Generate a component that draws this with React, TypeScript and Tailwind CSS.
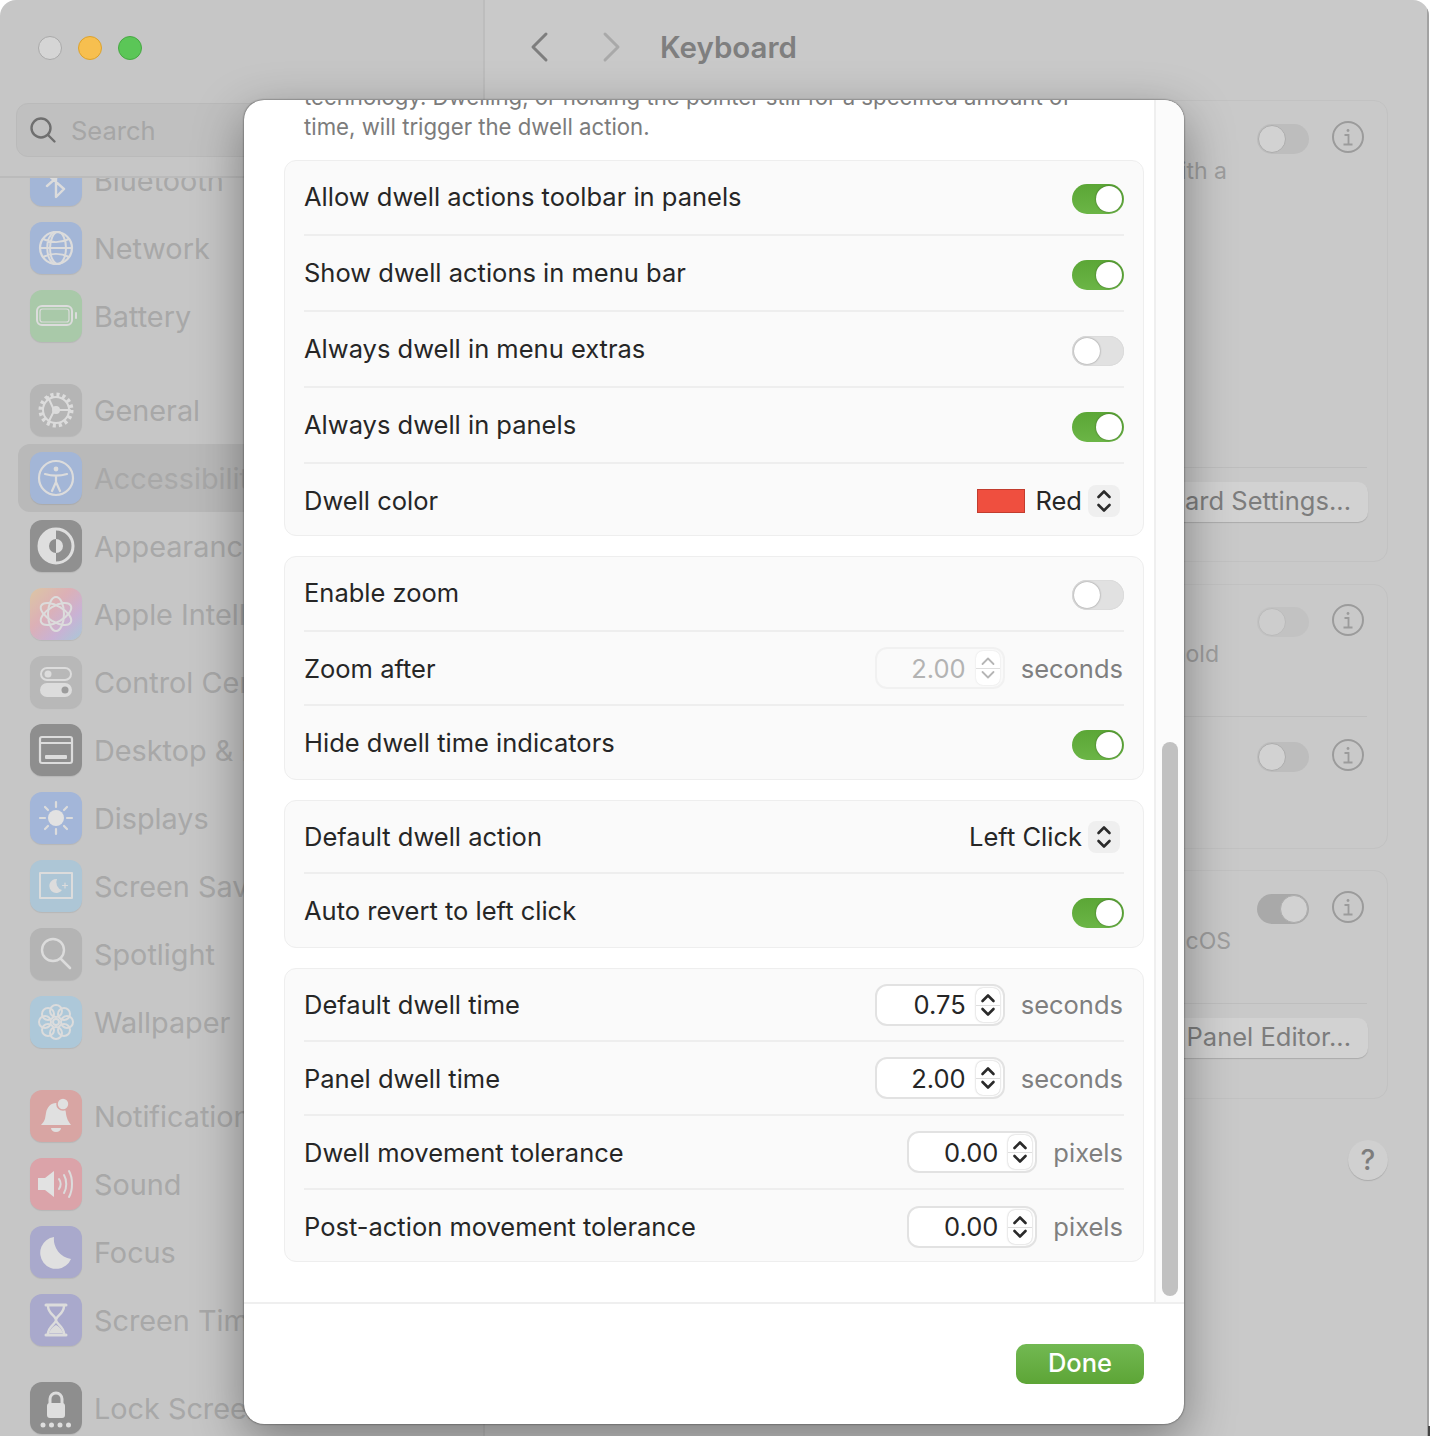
import React from "react";

const FONT = "font-['Inter','Noto_Sans',sans-serif]";

function Glyph({ children, bg }: { children: React.ReactNode; bg: string }) {
  return (
    <div className={`w-[52px] h-[52px] rounded-[12px] shrink-0 shadow-[0_1px_1px_rgba(0,0,0,0.08)] ${bg}`}>
      <svg width="52" height="52" viewBox="0 0 52 52" fill="none" stroke="#dcdcdc" strokeWidth="2" strokeLinecap="round" strokeLinejoin="round">
        {children}
      </svg>
    </div>
  );
}

const icons: Record<string, React.ReactNode> = {
  bluetooth: <path d="M17 20l17 15-8 8V9l8 8-17 15" strokeWidth="2.4" />,
  network: (
    <>
      <circle cx="26" cy="26" r="16" strokeWidth="2.2" />
      <ellipse cx="28" cy="26" rx="8" ry="16" />
      <path d="M13 17c8 4 18 4 26 0M10 26h32M13 35c8-4 18-4 26 0M24 10c-9 6-9 26 0 32" />
    </>
  ),
  battery: (
    <>
      <rect x="7" y="16" width="35" height="19" rx="5" strokeWidth="2" />
      <rect x="10" y="19" width="29" height="13" rx="2.5" strokeWidth="1.2" />
      <path d="M46 23v5" />
    </>
  ),
  general: (
    <>
      <circle cx="26" cy="26" r="15" strokeWidth="5" strokeDasharray="3 2.89" strokeLinecap="butt" />
      <circle cx="26" cy="26" r="13" />
      <circle cx="26" cy="26" r="3" fill="#dcdcdc" />
      <path d="M24 26L18 13M29 26h11M24 27l-6 12" />
    </>
  ),
  accessibility: (
    <>
      <circle cx="26" cy="26" r="17" strokeWidth="2.2" />
      <circle cx="26" cy="17" r="2.4" fill="#dcdcdc" stroke="none" />
      <path d="M15 22c7 2 15 2 22 0M26 24v6M26 30l-4 9M26 30l4 9" strokeWidth="2.2" />
    </>
  ),
  appearance: (
    <>
      <circle cx="26" cy="26" r="17" stroke="#dedede" strokeWidth="3" />
      <path d="M26 9a17 17 0 0 0 0 34z" fill="#dedede" stroke="none" />
      <path d="M26 19a7 7 0 0 0 0 14z" fill="#8e8e8e" stroke="none" />
      <path d="M26 19a7 7 0 0 1 0 14z" fill="#dedede" stroke="none" />
    </>
  ),
  intelligence: (
    <>
      <ellipse cx="26" cy="26" rx="8" ry="17" />
      <ellipse cx="26" cy="26" rx="8" ry="17" transform="rotate(60 26 26)" />
      <ellipse cx="26" cy="26" rx="8" ry="17" transform="rotate(120 26 26)" />
    </>
  ),
  control: (
    <>
      <rect x="11" y="12" width="30" height="12" rx="6" />
      <circle cx="18" cy="18" r="3.5" fill="#dcdcdc" stroke="none" />
      <rect x="11" y="28" width="30" height="12" rx="6" fill="#dcdcdc" />
      <circle cx="35" cy="34" r="3.5" fill="#9c9c9c" stroke="none" />
    </>
  ),
  desktop: (
    <>
      <rect x="10" y="13" width="32" height="26" rx="2" strokeWidth="2.2" />
      <path d="M10 19h32" />
      <rect x="15" y="31" width="22" height="4" rx="1" fill="#dcdcdc" stroke="none" />
    </>
  ),
  displays: (
    <>
      <circle cx="26" cy="26" r="8" fill="#e2e2e2" stroke="none" />
      <path d="M26 10v5M26 37v5M10 26h5M37 26h5M15 15l3 3M34 34l3 3M15 37l3-3M34 18l3-3" strokeWidth="2.2" />
    </>
  ),
  saver: (
    <>
      <rect x="10" y="13" width="32" height="25" strokeWidth="2" />
      <path d="M27 19a7 7 0 1 0 5 11 8 8 0 0 1-5-11z" fill="#dcdcdc" stroke="none" />
      <path d="M35 23v5M32.500 25.500h5" strokeWidth="1.2" />
    </>
  ),
  spotlight: (
    <>
      <circle cx="23" cy="22" r="11" strokeWidth="2.4" />
      <path d="M31 31l9 9" strokeWidth="2.6" />
    </>
  ),
  wallpaper: (
    <>
      <circle cx="26" cy="26" r="3" />
      <circle cx="26" cy="15" r="6" /><circle cx="26" cy="37" r="6" />
      <circle cx="15" cy="26" r="6" /><circle cx="37" cy="26" r="6" />
      <circle cx="18" cy="18" r="6" /><circle cx="34" cy="18" r="6" />
      <circle cx="18" cy="34" r="6" /><circle cx="34" cy="34" r="6" />
    </>
  ),
  notifications: (
    <>
      <path d="M11 35c4-4 4-6 5-12 1-6 5-10 10-10 3 0 5 1 7 3 2 3 3 5 3 8 1 5 2 7 5 11z" fill="#e0e0e0" stroke="none" />
      <path d="M21 38h10c0 2-2 4-5 4s-5-2-5-4z" fill="#e0e0e0" stroke="none" />
      <circle cx="33" cy="14" r="6" fill="#e0e0e0" stroke="#d9a5a3" strokeWidth="1.600" />
    </>
  ),
  sound: (
    <>
      <path d="M8 20h7l9-7v26l-9-7H8z" fill="#e2e2e2" stroke="none" />
      <path d="M29 21c2 3 2 7 0 10M34 17c3 5 3 13 0 18M39 13c4 7 4 19 0 26" />
    </>
  ),
  focus: <path d="M24 11a16 16 0 1 0 17 22 20 20 0 0 1-17-22z" fill="#e0e0e0" stroke="none" />,
  time: (
    <>
      <path d="M16 11h20M16 41h20" strokeWidth="3" />
      <path d="M18 12c0 8 8 10 8 14s-8 6-8 14M34 12c0 8-8 10-8 14s8 6 8 14" strokeWidth="2.4" />
      <path d="M19 39c2-5 5-7 7-8 2 1 5 3 7 8z" fill="#dcdcdc" stroke="none" />
    </>
  ),
  lock: (
    <>
      <path d="M20 22v-5a6 6 0 0 1 12 0v5" strokeWidth="3" />
      <rect x="17" y="21" width="18" height="15" rx="3" fill="#dedede" stroke="none" />
      <circle cx="13" cy="43" r="2.500" fill="#dedede" stroke="none" />
      <circle cx="21.500" cy="43" r="2.500" fill="#dedede" stroke="none" />
      <circle cx="30" cy="43" r="2.500" fill="#dedede" stroke="none" />
      <circle cx="38.500" cy="43" r="2.500" fill="#dedede" stroke="none" />
    </>
  ),
};

function NavItem({ icon, bg, label, active, className = "" }: { icon: string; bg: string; label: string; active?: boolean; className?: string }) {
  return (
    <div className={`h-[68px] flex items-center shrink-0 whitespace-nowrap ${className} ${active ? "bg-[#b9b9b9] rounded-[12px] ml-[18px] mr-[18px] pl-[12px]" : "pl-[30px]"}`}>
      <Glyph bg={bg}>{icons[icon]}</Glyph>
      <span className="ml-[12px] mt-[2px] text-[28.800px] leading-[36px] text-[#a8a8a8]">{label}</span>
    </div>
  );
}

function Sidebar() {
  return (
    <aside className="w-[485px] shrink-0 h-full flex flex-col border-r-2 border-[#bdbdbd] bg-[#c6c6c6]">
      <div className="h-[178px] shrink-0 border-b-2 border-[#bbbbbb] pt-[36px] pl-[38px]">
        <div className="flex gap-4">
          <div className="w-6 h-6 rounded-full bg-[#d5d5d5] border border-[#a9a9a9]" />
          <div className="w-6 h-6 rounded-full bg-[#f7bf4f] border border-[#dca22c]" />
          <div className="w-6 h-6 rounded-full bg-[#5bc657] border border-[#47a843]" />
        </div>
        <div className="mt-[43px] -ml-[22px] mr-[16px] h-[54px] rounded-[12px] bg-[#c0c0c0] border border-[#bababa] flex items-center pl-[12px]">
          <svg width="28" height="28" viewBox="0 0 28 28" fill="none" stroke="#6f6f6f" strokeWidth="2.400" strokeLinecap="round">
            <circle cx="12" cy="12" r="9.500" />
            <path d="M19 19l6.500 6.500" />
          </svg>
          <span className="ml-[14px] mt-[2px] text-[25.500px] text-[#a6a6a6]">Search</span>
        </div>
      </div>
      <nav className="flex-1 min-h-0 overflow-hidden flex flex-col">
        <div className="-mt-[32px] flex flex-col">
          <NavItem icon="bluetooth" bg="bg-[#a3b6d7]" label="Bluetooth" />
          <NavItem icon="network" bg="bg-[#a3b6d7]" label="Network" />
          <NavItem icon="battery" bg="bg-[#a9c9a9]" label="Battery" />
          <NavItem icon="general" bg="bg-[#b5b5b5]" label="General" className="mt-[26px]" />
          <NavItem icon="accessibility" bg="bg-[#a3b6d7]" label="Accessibility" active />
          <NavItem icon="appearance" bg="bg-[#909090]" label="Appearance" />
          <NavItem icon="intelligence" bg="bg-[linear-gradient(135deg,#dcc6a4_0%,#dcb0b6_40%,#c9b2d4_70%,#a9c8d8_100%)]" label="Apple Intelligence" />
          <NavItem icon="control" bg="bg-[#b8b8b8]" label="Control Center" />
          <NavItem icon="desktop" bg="bg-[#8e8e8e]" label="Desktop & Dock" />
          <NavItem icon="displays" bg="bg-[#a3b6d9]" label="Displays" />
          <NavItem icon="saver" bg="bg-[#adc6d6]" label="Screen Saver" />
          <NavItem icon="spotlight" bg="bg-[#b4b4b4]" label="Spotlight" />
          <NavItem icon="wallpaper" bg="bg-[#adc8d9]" label="Wallpaper" />
          <NavItem icon="notifications" bg="bg-[#d8a5a3]" label="Notifications" className="mt-[26px]" />
          <NavItem icon="sound" bg="bg-[#dba3a9]" label="Sound" />
          <NavItem icon="focus" bg="bg-[#a9a9cc]" label="Focus" />
          <NavItem icon="time" bg="bg-[#a9a9cc]" label="Screen Time" />
          <NavItem icon="lock" bg="bg-[#8e8e8e]" label="Lock Screen" className="mt-[20px]" />
        </div>
      </nav>
    </aside>
  );
}

function InfoIcon() {
  return (
    <svg width="32" height="34" viewBox="0 0 32 34" fill="none" stroke="#9b9b9b" className="shrink-0 -translate-y-[2px]">
      <circle cx="16" cy="17" r="15" strokeWidth="2" />
      <circle cx="16" cy="10.500" r="1.400" fill="#9b9b9b" stroke="none" />
      <path d="M12.500 15H16.500V24M11.500 24.500H20.500" strokeWidth="1.800" />
    </svg>
  );
}

function BgToggle({ on, faded }: { on?: boolean; faded?: boolean }) {
  return (
    <div className={`w-[52px] h-[30px] rounded-full flex items-center px-[1px] ${on ? "justify-end bg-[#a9a9a9]" : "bg-[#bdbdbd]"} ${faded ? "opacity-50" : ""}`}>
      <div className="w-[28px] h-[28px] rounded-full bg-[#d2d2d2] border border-[#adadad]" />
    </div>
  );
}

function BgRow({ text, on, faded, tall, textPad }: { text?: string; on?: boolean; faded?: boolean; tall?: string; textPad?: string }) {
  return (
    <div className={`${tall} pr-[23px]`}>
      <div className="flex justify-end items-center gap-[23px]">
        <BgToggle on={on} faded={faded} />
        <InfoIcon />
      </div>
      {text && <div className={`text-right text-[23px] leading-[30px] text-[#9d9d9d] ${textPad}`}>{text}</div>}
    </div>
  );
}

function BgButton({ label, w }: { label: string; w: string }) {
  return (
    <div className="flex justify-end pr-[19px] pt-[14px]">
      <div className={`${w} h-[40px] rounded-[10px] bg-[#d2d2d2] shadow-[0_1px_1px_rgba(0,0,0,0.15)] flex items-center justify-end pr-[17px] pb-[1px] text-[25.500px] text-[#7d7d7d] whitespace-nowrap`}>
        {label}
      </div>
    </div>
  );
}

function Main() {
  return (
    <main className="flex-1 min-w-0 h-full bg-[#c9c9c9] border-r-2 border-[#a2a2a2] flex flex-col">
      <header className="h-[100px] shrink-0 flex items-center">
        <svg width="22" height="32" viewBox="0 0 22 32" fill="none" stroke="#7e7e7e" strokeWidth="3" strokeLinecap="round" strokeLinejoin="round" className="ml-[43px] -mt-[6px]">
          <path d="M18 3L5 16l13 13" />
        </svg>
        <svg width="22" height="32" viewBox="0 0 22 32" fill="none" stroke="#a9a9a9" strokeWidth="3" strokeLinecap="round" strokeLinejoin="round" className="ml-[51px] -mt-[6px]">
          <path d="M4 3l13 13L4 29" />
        </svg>
        <h1 className="ml-[37px] -mt-[6px] text-[29.500px] font-semibold text-[#7f7f7f]">Keyboard</h1>
      </header>
      <div className="pl-[20px] pr-[39px] flex flex-col">
        <section className="h-[462px] rounded-[14px] border border-[#c2c2c2] pt-[21px] flex flex-col">
          <BgRow text="with a" tall="h-[345px]" textPad="pr-[137px]" />
          <div className="border-b border-[#bebebe] mx-[20px]" />
          <BgButton label="Keyboard Settings..." w="w-[320px]" />
        </section>
        <section className="mt-[22px] h-[265px] rounded-[14px] border border-[#c2c2c2] pt-[20px] flex flex-col">
          <BgRow text="hold" faded tall="h-[111px]" textPad="pr-[145px]" />
          <div className="border-b border-[#bebebe] mx-[20px]" />
          <div className="pt-[23px]"><BgRow /></div>
        </section>
        <section className="mt-[21px] h-[229px] rounded-[14px] border border-[#c2c2c2] pt-[21px] flex flex-col">
          <BgRow text="macOS" on tall="h-[111px]" textPad="pr-[133px]" />
          <div className="border-b border-[#bebebe] mx-[20px]" />
          <BgButton label="Panel Editor..." w="w-[300px]" />
        </section>
      </div>
      <div className="flex justify-end pr-[39px] mt-[41px]">
        <div className="w-[40px] h-[40px] rounded-full bg-[#d0d0d0] shadow-[0_1px_1px_rgba(0,0,0,0.15)] flex items-center justify-center text-[28px] font-medium text-[#7d7d7d]">?</div>
      </div>
    </main>
  );
}

function Toggle({ on, low }: { on?: boolean; low?: boolean }) {
  return (
    <div className={`${low ? "mt-[5px]" : "mt-[3px]"} w-[52px] h-[30px] rounded-full flex items-center px-[2px] ${on ? "justify-end bg-[linear-gradient(180deg,#5ba636,#6bb546)]" : "bg-[#e1e1e1] shadow-[inset_0_0_1px_rgba(0,0,0,0.2)]"}`}>
      <div className="w-[26px] h-[26px] rounded-full bg-white shadow-[0_0_2px_rgba(0,0,0,0.45)]" />
    </div>
  );
}

function UpDown({ color = "#2a2a2a", w = 2.600 }: { color?: string; w?: number }) {
  return (
    <svg width="16" height="26" viewBox="0 0 16 26" fill="none" stroke={color} strokeWidth={w} strokeLinecap="round" strokeLinejoin="round">
      <path d="M2.500 9L8 3.500 13.500 9M2.500 17L8 22.500 13.500 17" />
    </svg>
  );
}

function Select({ label, swatch }: { label: string; swatch?: boolean }) {
  return (
    <div className="flex items-center">
      {swatch && <div className="w-[48px] h-[24px] bg-[#ef4f3f] border border-[#c23c2e] mr-[10px]" />}
      <span className={`text-[25.500px] text-[#262626] ${swatch ? "" : "mt-[2px]"}`}>{label}</span>
      <div className="ml-[6px] mr-[4px] w-[32px] h-[32px] rounded-[8px] bg-[#efefef] flex items-center justify-center">
        <UpDown />
      </div>
    </div>
  );
}

function NumberField({ value, unit, disabled }: { value: string; unit: string; disabled?: boolean }) {
  return (
    <div className="flex items-center">
      <div className={`w-[130px] h-[42px] rounded-[12px] border-2 flex items-center justify-end pr-[3px] ${disabled ? "bg-[#fafafa] border-[#f1f1f1]" : "bg-white border-[#e2e2e2]"}`}>
        <span className={`mt-[2px] text-[25.500px] ${disabled ? "text-[#b3b3b3]" : "text-[#262626]"}`}>{value}</span>
        <div className={`relative ml-[10px] w-[24px] h-[34px] rounded-[7px] bg-white flex items-center justify-center ${disabled ? "shadow-[0_0_2px_rgba(0,0,0,0.12)]" : "shadow-[0_0_2px_rgba(0,0,0,0.3)]"}`}>
          <UpDown color={disabled ? "#b5b5b5" : "#2a2a2a"} w={disabled ? 1.800 : 2.600} />
          <div className="absolute left-0 right-0 top-1/2 h-[1px] bg-[#dedede]" />
        </div>
      </div>
      <span className="ml-[16px] mr-[1px] mt-[2px] text-[25.500px] text-[#7f7f7f]">{unit}</span>
    </div>
  );
}

function Row({ label, children, h, last, lift }: { label: string; children: React.ReactNode; h: string; last?: boolean; lift?: boolean }) {
  return (
    <div className={`${h} mx-[19px] flex items-center justify-between ${last ? "" : "border-b-2 border-[#eeeeee]"}`}>
      <span className={`text-[25.500px] text-[#262626] whitespace-nowrap ${lift ? "" : "mt-[2px]"}`}>{label}</span>
      <div className="flex items-center">{children}</div>
    </div>
  );
}

function Card({ children }: { children: React.ReactNode }) {
  return <section className="rounded-[12px] bg-[#fafafa] border border-[#eeeeee]">{children}</section>;
}

function Sheet() {
  return (
    <div className="absolute left-[244px] top-[100px] w-[940px] h-[1324px] rounded-[20px] bg-white flex flex-col overflow-hidden shadow-[0_16px_50px_rgba(0,0,0,0.38),0_0_2px_rgba(0,0,0,0.7)]">
      <div className="flex-1 min-h-0 flex">
        <div className="flex-1 min-w-0 overflow-hidden pl-[40px] pr-[10px]">
          <p className="-mt-[18px] mb-[18px] pl-[20px] pr-[60px] text-[22.200px] leading-[30px] text-[#7c7c7c]">
            technology. Dwelling, or holding the pointer still for a specified amount of time, will trigger the dwell action.
          </p>
          <div className="flex flex-col gap-[20px]">
            <Card>
              <Row label="Allow dwell actions toolbar in panels" h="h-[75px]" lift><Toggle on /></Row>
              <Row label="Show dwell actions in menu bar" h="h-[76px]" lift><Toggle on /></Row>
              <Row label="Always dwell in menu extras" h="h-[76px]" lift><Toggle /></Row>
              <Row label="Always dwell in panels" h="h-[76px]" lift><Toggle on /></Row>
              <Row label="Dwell color" h="h-[71px] pt-[3px]" last lift><Select label="Red" swatch /></Row>
            </Card>
            <Card>
              <Row label="Enable zoom" h="h-[75px]" lift><Toggle /></Row>
              <Row label="Zoom after" h="h-[74px]"><NumberField value="2.00" unit="seconds" disabled /></Row>
              <Row label="Hide dwell time indicators" h="h-[73px]" last><Toggle on low /></Row>
            </Card>
            <Card>
              <Row label="Default dwell action" h="h-[73px]"><Select label="Left Click" /></Row>
              <Row label="Auto revert to left click" h="h-[73px]" last><Toggle on low /></Row>
            </Card>
            <Card>
              <Row label="Default dwell time" h="h-[73px]"><NumberField value="0.75" unit="seconds" /></Row>
              <Row label="Panel dwell time" h="h-[74px]"><NumberField value="2.00" unit="seconds" /></Row>
              <Row label="Dwell movement tolerance" h="h-[74px]"><NumberField value="0.00" unit="pixels" /></Row>
              <Row label="Post-action movement tolerance" h="h-[71px] pt-[2px]" last><NumberField value="0.00" unit="pixels" /></Row>
            </Card>
          </div>
        </div>
        <div className="w-[30px] shrink-0 border-l-2 border-[#efefef] bg-[#fbfbfb] flex flex-col justify-end pl-[6px] pb-[6px]">
          <div className="w-[16px] h-[554px] rounded-full bg-[#c1c1c1]" />
        </div>
      </div>
      <footer className="h-[122px] shrink-0 border-t-2 border-[#efefef] flex justify-end pr-[40px] pt-[40px]">
        <div className="w-[128px] h-[40px] rounded-[10px] bg-[linear-gradient(180deg,#72b952,#5da536)] flex items-center justify-center pb-[2px] text-[25.500px] font-medium text-white">
          Done
        </div>
      </footer>
    </div>
  );
}

export default function App() {
  return (
    <div className={`relative w-[1430px] h-[1436px] overflow-hidden bg-white ${FONT}`}>
      <div className="flex w-[1429px] h-full rounded-t-[16px] overflow-hidden">
        <Sidebar />
        <Main />
      </div>
      <Sheet />
      <div className="absolute right-0 bottom-0 w-[2px] h-[10px] bg-[#444444]" />
    </div>
  );
}
